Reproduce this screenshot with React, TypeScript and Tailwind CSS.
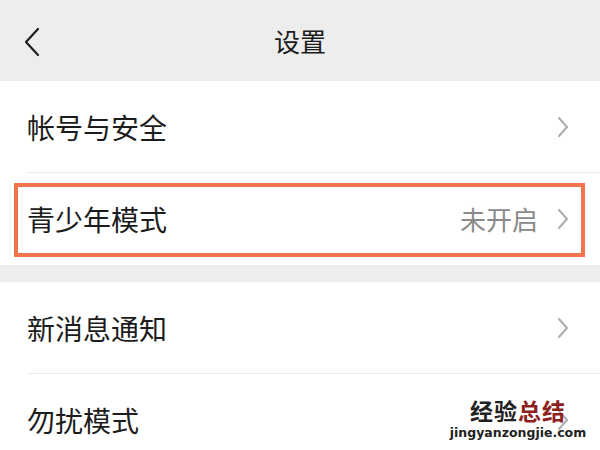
import React from "react";

const font = { fontFamily: '"Noto Sans CJK SC", "Noto Sans", sans-serif' };

function Chevron() {
  return (
    <svg width="14" height="24" viewBox="0 0 14 24" className="shrink-0">
      <path d="M3 3 L11 12 L3 21" fill="none" stroke="#acacac" strokeWidth="2" strokeLinecap="round" strokeLinejoin="round" />
    </svg>
  );
}

function Row({ label, value, sep, highlight }: { label: string; value?: string; sep?: boolean; highlight?: boolean }) {
  return (
    <div className="relative h-[92px] bg-white flex items-center pl-[27px] pr-[30px]">
      {highlight && (
        <div className="absolute left-[14px] right-[15px] top-[10px] bottom-[8px] border-[4px] border-[#f2744a]" />
      )}
      <span className="text-[28px] text-[#1c1c1c] leading-none flex-1">{label}</span>
      {value && <span className="text-[26px] text-[#8a8a8a] leading-none mr-[18px]">{value}</span>}
      <Chevron />
      {sep && <div className="absolute left-[27px] right-0 bottom-0 h-px bg-[#ececec]" />}
    </div>
  );
}

export default function App() {
  return (
    <div className="w-[600px] h-[450px] overflow-hidden bg-white relative" style={font}>
      <div className="h-[81px] bg-[#ededed] flex items-center relative">
        <svg width="20" height="30" viewBox="0 0 20 30" className="absolute left-[22px] top-[27px]">
          <path d="M16 2 L4 15 L16 28" fill="none" stroke="#1c1c1c" strokeWidth="2.2" strokeLinecap="round" strokeLinejoin="round" />
        </svg>
        <div className="w-full text-center text-[26px] text-[#1c1c1c] leading-none">设置</div>
      </div>
      <Row label="帐号与安全" sep />
      <Row label="青少年模式" value="未开启" highlight />
      <div className="h-[17px] bg-[#ededed]" />
      <Row label="新消息通知" sep />
      <Row label="勿扰模式" />
      <div className="absolute left-[448px] top-[399px] w-[140px] flex flex-col items-center">
        <div className="text-[23px] font-bold leading-none tracking-[1px]">
          <span className="text-[#222]">经验</span>
          <span className="text-[#8e1f1f]">总结</span>
        </div>
        <div className="text-[12.5px] leading-none mt-[5px] text-[#222] font-semibold" style={{ fontFamily: '"DejaVu Sans", sans-serif' }}>
          jingyanzongjie.com
        </div>
      </div>
    </div>
  );
}
